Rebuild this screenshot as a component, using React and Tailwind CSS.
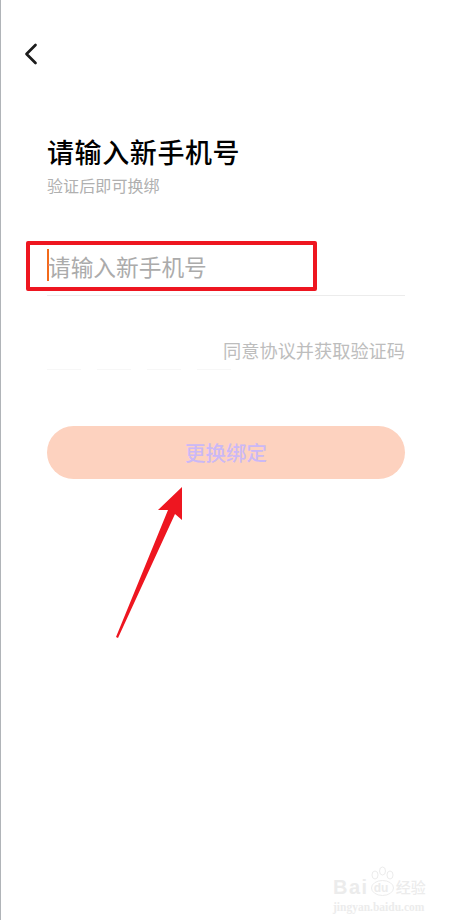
import { ChevronLeft } from 'lucide-react'

const cjk = { fontFamily: '"Noto Sans CJK SC", "Noto Sans", sans-serif' }

function Watermark() {
  return (
    <div className="absolute left-[332px] top-[866px] flex flex-col items-start text-[#ececec]" style={cjk}>
      <div className="flex items-end h-[31px]">
        <span className="text-[20px] font-bold leading-[20px] font-['Liberation_Sans'] tracking-[1.5px]">Bai</span>
        <div className="relative w-[27px] h-[31px] shrink-0">
          <svg width="27" height="31" viewBox="0 0 27 31" fill="none" stroke="#ececec" strokeWidth="1">
            <ellipse cx="13.5" cy="22" rx="11" ry="7.5" />
            <ellipse cx="6" cy="9" rx="3" ry="4" />
            <ellipse cx="13.5" cy="5" rx="3" ry="4" />
            <ellipse cx="21" cy="9" rx="3" ry="4" />
          </svg>
          <span className="absolute left-[5px] top-[15px] text-[12px] font-bold leading-[14px] font-['Liberation_Sans']">du</span>
        </div>
        <span className="text-[15px] leading-[20px] font-medium">经验</span>
      </div>
      <span className="text-[11.5px] font-bold leading-[14px] mt-[3px] font-['Liberation_Serif']">jingyan.baidu.com</span>
    </div>
  )
}

export default function App() {
  return (
    <div className="relative w-[450px] h-[920px] overflow-hidden bg-white border-l border-[#b0b4b8]" style={cjk}>
      {/* header */}
      <div className="pl-[12px] pt-[36px] h-[130px]">
        <ChevronLeft size={36} strokeWidth={1.8} className="text-[#1c1c1c]" />
      </div>

      <div className="pl-[46px] pr-[45px]">
        <h1 className="text-[27px] leading-[44px] font-medium text-black tracking-[0.6px] h-[44px]">请输入新手机号</h1>
        <p className="text-[16px] leading-[24px] -mt-[1px] tracking-[0.1px] text-[#b0b0b0]">验证后即可换绑</p>

        {/* phone input */}
        <div className="mt-[49px] h-[50px] border-b border-[#ececec] flex items-start">
          <div className="w-[2px] h-[32px] mt-[3px] bg-[#f26a1b] shrink-0" />
          <span className="text-[22.7px] leading-[38px] mt-[2px] text-[#ababab] -ml-[1px]">请输入新手机号</span>
        </div>

        {/* code row */}
        <div className="mt-[37px] h-[34px] flex justify-end items-center">
          <span className="text-[18.2px] leading-[28px] text-[#bdbdbd]">同意协议并获取验证码</span>
        </div>
        <div className="flex gap-[16px] h-[1px] mt-[2px]">
          <div className="w-[34px] bg-[#f7f7f7]" />
          <div className="w-[34px] bg-[#f7f7f7]" />
          <div className="w-[34px] bg-[#f7f7f7]" />
          <div className="w-[34px] bg-[#f7f7f7]" />
        </div>

        <button className="mt-[56px] w-full h-[53px] rounded-full bg-[#fdd2bf] text-[20.5px] font-medium text-[#cbb8f6] flex items-center justify-center">
          更换绑定
        </button>
      </div>

      {/* annotation overlay */}
      <div className="absolute left-[25px] top-[241px] w-[291px] h-[50px] border-[4px] border-[#ee1620] rounded-[2px]" />
      <svg className="absolute left-[-1px] top-0" width="450" height="920" viewBox="0 0 450 920">
        <polygon points="182,487 158,510 168,510 116,637 118,638 175,514 182,520" fill="#ee1620" />
      </svg>

      <Watermark />
    </div>
  )
}
